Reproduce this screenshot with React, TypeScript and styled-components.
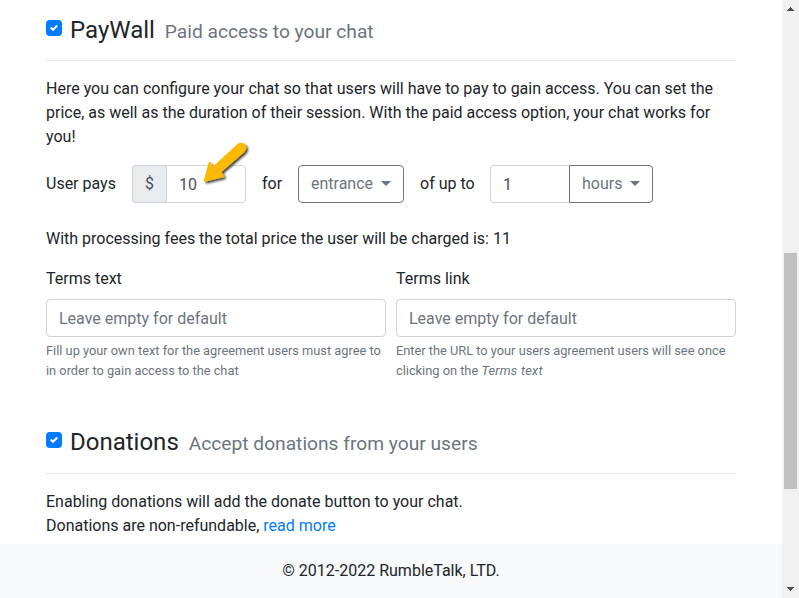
import React from "react";
import styled, { createGlobalStyle } from "styled-components";

const GlobalStyle = createGlobalStyle`
  *, *::before, *::after { box-sizing: border-box; }
  body {
    margin: 0;
    overflow: hidden;
    background: #fff;
    color: #212529;
    font: 400 16px/24px Roboto, "Liberation Sans", sans-serif;
  }
`;

const Window = styled.div`
  display: grid;
  grid-template-columns: 1fr 17px;
  height: 598px;
`;

const Page = styled.div`
  display: flex;
  flex-direction: column;
  min-width: 0;
`;

const Content = styled.main`
  flex: 1;
  padding: 15px 46px 0;
`;

const Section = styled.section<{ $gap?: number }>`
  margin-top: ${(p) => p.$gap ?? 0}px;
`;

const Header = styled.header<{ $space: number }>`
  display: flex;
  height: ${(p) => p.$space}px;
  border-bottom: 1px solid #e5e5e5;
`;

const Check = styled.span`
  display: flex;
  align-items: center;
  justify-content: center;
  width: 16px;
  height: 16px;
  margin: 5px 8px 0 0;
  border-radius: 4px;
  background: #007bff;
`;

const Title = styled.h4`
  margin: 1px 0 0;
  font-size: 24px;
  font-weight: 400;
  line-height: 29px;
  white-space: nowrap;
`;

const Subtitle = styled.small`
  margin-left: 4px;
  font-size: 19.2px;
  color: #6c757d;
`;

const Text = styled.p`
  margin: 16px 0 0;
`;

const Total = styled.p`
  margin: 24px 0 0;
`;

const Row = styled.div`
  display: flex;
  align-items: center;
  height: 38px;
  margin-top: 16px;
`;

const RowLabel = styled.span<{ $width: number; $indent?: number }>`
  width: ${(p) => p.$width}px;
  padding-left: ${(p) => p.$indent ?? 0}px;
  white-space: nowrap;
`;

const Group = styled.div`
  display: flex;
  height: 38px;
`;

const PriceGroup = styled(Group)`
  position: relative;
  width: 114px;
  margin-right: 16px;
`;

const Prefix = styled.span`
  width: 34px;
  padding: 6px 0 6px 12px;
  border: 1px solid #ced4da;
  border-right: 0;
  border-radius: 4px 0 0 4px;
  background: #e9ecef;
  color: #495057;
`;

const Input = styled.input<{ $join?: "left" | "right" }>`
  width: ${(p) => (p.$join === "right" ? "79px" : p.$join === "left" ? "80px" : "100%")};
  height: 38px;
  padding: 6px 12px;
  border: 1px solid #ced4da;
  border-right-width: ${(p) => (p.$join === "right" ? 0 : 1)}px;
  border-radius: ${(p) =>
    p.$join === "left" ? "0 4px 4px 0" : p.$join === "right" ? "4px 0 0 4px" : "4px"};
  background: #fff;
  color: #495057;
  font: inherit;
  outline: 0;
  &::placeholder { color: #6c757d; opacity: 1; }
`;

const Select = styled.button<{ $width: number; $joined?: boolean }>`
  display: flex;
  align-items: center;
  width: ${(p) => p.$width}px;
  height: 38px;
  padding: 0 12px;
  border: 1px solid #6c757d;
  border-radius: ${(p) => (p.$joined ? "0 4px 4px 0" : "4px")};
  background: #fff;
  color: #6c757d;
  font: inherit;
  &::after {
    content: "";
    flex: none;
    margin: 0 0 2px 8px;
    border: 5px solid transparent;
    border-top-color: currentColor;
    border-bottom: 0;
  }
`;

const Fields = styled.div`
  display: grid;
  grid-template-columns: 1fr 1fr;
  gap: 10px;
  margin-top: 16px;
`;

const Label = styled.label`
  display: block;
  margin-bottom: 8px;
`;

const Hint = styled.small`
  display: block;
  margin-top: 4px;
  font-size: 12.8px;
  line-height: 20px;
  color: #6c757d;
  em { letter-spacing: 0.25px; }
`;

const Link = styled.a`
  color: #007bff;
  text-decoration: none;
`;

const Footer = styled.footer`
  height: 54px;
  padding-top: 15px;
  background: #f8f9fa;
  text-align: center;
`;

const Scrollbar = styled.div`
  display: flex;
  flex-direction: column;
  align-items: center;
  padding-top: 7px;
  background: #f1f1f1;
`;

const Thumb = styled.div`
  flex: none;
  width: 13px;
  height: 236px;
  margin: 242px 0 98px;
  background: #c1c1c1;
`;

const Pointer = styled.svg`
  position: absolute;
  left: 65px;
  top: -27px;
  overflow: visible;
  pointer-events: none;
`;

const CheckBox = () => (
  <Check role="checkbox" aria-checked="true">
    <svg width="8" height="8" viewBox="0 0 8 8">
      <path fill="#fff" d="M6.564.75l-3.59 3.612-1.538-1.55L0 4.26l2.974 2.99L8 2.193z" />
    </svg>
  </Check>
);

const Arrow = () => (
  <Pointer width="56" height="54" viewBox="0 0 56 54">
    <defs>
      <filter id="shade" x="-20%" y="-20%" width="150%" height="150%">
        <feDropShadow dx="1.8" dy="1.8" stdDeviation="1.1" floodColor="#000" floodOpacity="0.75" />
      </filter>
    </defs>
    <path
      d="M41 6.500Q45.500 4 48 7.500Q49.500 10.500 46.500 14L23.500 34L26.500 38.500L7.500 43L12.500 24.500L16 29.500Z"
      fill="#fdb902"
      stroke="#fdb902"
      strokeWidth="1.500"
      strokeLinejoin="round"
      filter="url(#shade)"
    />
  </Pointer>
);

const Caret = ({ up }: { up?: boolean }) => (
  <svg width="7" height="4" viewBox="0 0 7 4" shapeRendering="crispEdges">
    <path fill="#505050" d={up ? "M3 0h1v1h1v1h1v1h1v1H0V3h1V2h1V1h1z" : "M0 0h7v1H6v1H5v1H4v1H3V3H2V2H1V1H0z"} />
  </svg>
);

export default function App() {
  return (
    <>
      <GlobalStyle />
      <Window>
        <Page>
          <Content>
            <Section>
              <Header $space={46}>
                <CheckBox />
                <Title>
                  PayWall <Subtitle>Paid access to your chat</Subtitle>
                </Title>
              </Header>
              <Text>
                Here you can configure your chat so that users will have to pay to gain access. You can set the
                price, as well as the duration of their session. With the paid access option, your chat works for
                you!
              </Text>
              <Row>
                <RowLabel $width={86}>User pays</RowLabel>
                <PriceGroup>
                  <Prefix>$</Prefix>
                  <Input $join="left" defaultValue="10" aria-label="Price" />
                  <Arrow />
                </PriceGroup>
                <RowLabel $width={36}>for</RowLabel>
                <Select $width={106}>entrance</Select>
                <RowLabel $width={86} $indent={16}>of up to</RowLabel>
                <Group>
                  <Input $join="right" defaultValue="1" aria-label="Duration" />
                  <Select $width={84} $joined>hours</Select>
                </Group>
              </Row>
              <Total>With processing fees the total price the user will be charged is: 11</Total>
              <Fields>
                <div>
                  <Label htmlFor="terms-text">Terms text</Label>
                  <Input id="terms-text" placeholder="Leave empty for default" />
                  <Hint>Fill up your own text for the agreement users must agree to in order to gain access to the chat</Hint>
                </div>
                <div>
                  <Label htmlFor="terms-link">Terms link</Label>
                  <Input id="terms-link" placeholder="Leave empty for default" />
                  <Hint>
                    Enter the URL to your users agreement users will see once clicking on the <em>Terms text</em>
                  </Hint>
                </div>
              </Fields>
            </Section>
            <Section $gap={46}>
              <Header $space={47}>
                <CheckBox />
                <Title>
                  Donations <Subtitle>Accept donations from your users</Subtitle>
                </Title>
              </Header>
              <Text>
                Enabling donations will add the donate button to your chat.
                <br />
                Donations are non-refundable, <Link>read more</Link>
              </Text>
            </Section>
          </Content>
          <Footer>© 2012-2022 RumbleTalk, LTD.</Footer>
        </Page>
        <Scrollbar>
          <Caret up />
          <Thumb />
          <Caret />
        </Scrollbar>
      </Window>
    </>
  );
}
